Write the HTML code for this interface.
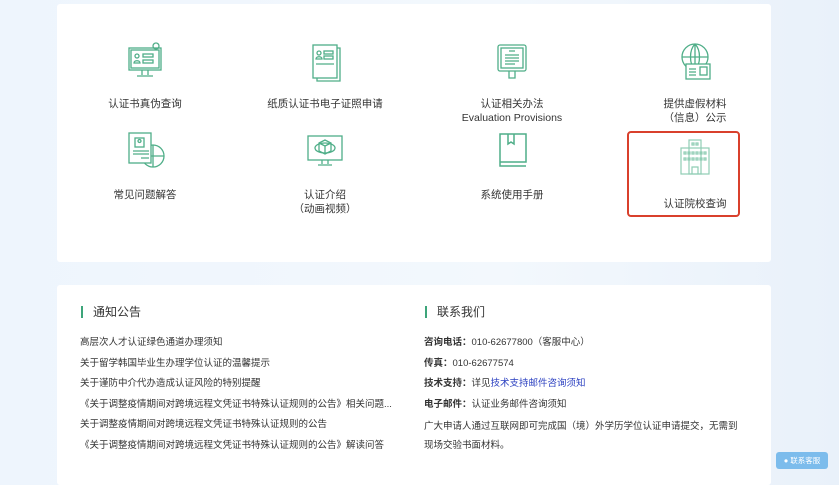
<!DOCTYPE html>
<html><head><meta charset="utf-8"><style>
*{margin:0;padding:0;box-sizing:border-box}
body{width:839px;height:476px;overflow:hidden;background:linear-gradient(90deg,#eef5fd 0%,#f3f8fd 60%,#e9f1fa 100%);font-family:"Liberation Sans","Noto Sans CJK SC",sans-serif;color:#333;font-size:10.5px;position:relative}
.card{position:absolute;left:57px;width:714px;background:#fff;border-radius:3px}
.c1{top:4px;height:258px}
.c2{top:285px;height:200px}
.item{position:absolute;width:160px;text-align:center;font-size:10.5px;line-height:14px;color:#333}
.item svg{display:block;margin:0 auto}
.red{position:absolute;left:627px;top:131px;width:113px;height:86px;border:2.5px solid #d9402c;border-radius:4px}
.h{position:absolute;font-size:12px;color:#333;padding-left:10px;border-left:2px solid #3da57a;line-height:12px}
.l{position:absolute;font-size:9.5px;color:#333;white-space:nowrap}
b{font-weight:bold}
.btn{position:absolute;left:776px;top:452px;width:52px;height:17px;background:#7cbcec;border-radius:3px;color:#fff;font-size:7.5px;line-height:17px;text-align:center}
</style></head><body>
<div class="card c1"></div>
<div class="card c2"></div>
<div class="item" style="left:65px;top:42px">
<svg width="40" height="40" viewBox="0 0 40 40" fill="none" stroke="#4fae88" stroke-width="1.3"><rect x="4" y="6" width="32" height="22"/><rect x="6" y="8" width="28" height="18"/><circle cx="12" cy="14" r="2"/><path d="M9 21c0-3 6-3 6 0z"/><rect x="18" y="12" width="10" height="3"/><rect x="18" y="18" width="10" height="3"/><path d="M17 28v5M23 28v5M12 34h16"/><circle cx="31" cy="4" r="3"/></svg><div style="margin-top:15px">认证书真伪查询</div></div>
<div class="item" style="left:245px;top:42px">
<svg width="40" height="40" viewBox="0 0 40 40" fill="none" stroke="#4fae88" stroke-width="1.3"><rect x="8" y="3" width="24" height="33"/><path d="M32 6h3v33H12v-3"/><circle cx="14" cy="11" r="2"/><path d="M11 17c0-3 6-3 6 0z"/><rect x="19" y="9" width="9" height="3"/><rect x="19" y="14" width="9" height="3"/><path d="M11 22h18"/></svg><div style="margin-top:15px">纸质认证书电子证照申请</div></div>
<div class="item" style="left:432px;top:42px">
<svg width="40" height="40" viewBox="0 0 40 40" fill="none" stroke="#4fae88" stroke-width="1.3"><rect x="6" y="3" width="28" height="26" rx="2"/><rect x="9" y="6" width="22" height="20"/><path d="M17 9h6M13 13h14M13 16h14M13 19h14M13 22h10"/><path d="M17 29v7h6v-7"/></svg><div style="margin-top:15px">认证相关办法<br>Evaluation Provisions</div></div>
<div class="item" style="left:615px;top:42px">
<svg width="40" height="40" viewBox="0 0 40 40" fill="none" stroke="#4fae88" stroke-width="1.3"><circle cx="20" cy="15" r="13"/><path d="M7 15h26M20 2v26M20 2c-6 6-6 20 0 26M20 2c6 6 6 20 0 26"/><rect x="11" y="22" width="24" height="15" fill="#fff"/><path d="M14 27h7M14 30h7M14 33h7"/><rect x="25" y="25" width="7" height="8"/></svg><div style="margin-top:15px">提供虚假材料<br>（信息）公示</div></div>
<div class="item" style="left:65px;top:130px">
<svg width="40" height="40" viewBox="0 0 40 40" fill="none" stroke="#4fae88" stroke-width="1.3"><circle cx="28" cy="26" r="11"/><path d="M17 26h22M28 15v22"/><rect x="4" y="3" width="22" height="30" fill="#fff"/><rect x="10" y="8" width="9" height="9"/><circle cx="14.5" cy="11" r="1.5"/><path d="M8 21h16M8 24h16M16 28h8"/></svg><div style="margin-top:18px">常见问题解答</div></div>
<div class="item" style="left:245px;top:130px">
<svg width="40" height="40" viewBox="0 0 40 40" fill="none" stroke="#4fae88" stroke-width="1.3"><rect x="3" y="6" width="34" height="24"/><path d="M14 13l6-3 6 3v8l-6 3-6-3zM14 13l6 3 6-3M20 16v8"/><ellipse cx="20" cy="18" rx="10" ry="5"/><path d="M17 30v4M23 30v4M13 35h14"/></svg><div style="margin-top:18px">认证介绍<br>（动画视频）</div></div>
<div class="item" style="left:432px;top:130px">
<svg width="40" height="40" viewBox="0 0 40 40" fill="none" stroke="#4fae88" stroke-width="1.5"><path d="M8 4h26v28H8zM8 32v4h26M16 4v10l3-2 3 2V4"/></svg><div style="margin-top:18px">系统使用手册</div></div>
<div class="item" style="left:615px;top:136px">
<svg width="40" height="40" viewBox="0 0 40 40" fill="none" stroke="#8fcdb4" stroke-width="1.2"><rect x="14" y="4" width="12" height="34"/><rect x="6" y="12" width="28" height="26"/><path d="M17 7h2v2h-2zM21 7h2v2h-2zM9 16h2v2H9zM13 16h2v2h-2zM17 16h2v2h-2zM21 16h2v2h-2zM25 16h2v2h-2zM29 16h2v2h-2zM9 22h2v2H9zM13 22h2v2h-2zM17 22h2v2h-2zM21 22h2v2h-2zM25 22h2v2h-2zM29 22h2v2h-2zM17 38v-7h6v7"/></svg><div style="margin-top:21px">认证院校查询</div></div>
<div class="red"></div>
<div class="h" style="left:81px;top:306px">通知公告</div>
<div class="l" style="left:80px;top:334px">高层次人才认证绿色通道办理须知</div>
<div class="l" style="left:80px;top:355px">关于留学韩国毕业生办理学位认证的温馨提示</div>
<div class="l" style="left:80px;top:375px">关于谨防中介代办造成认证风险的特别提醒</div>
<div class="l" style="left:80px;top:396px">《关于调整疫情期间对跨境远程文凭证书特殊认证规则的公告》相关问题...</div>
<div class="l" style="left:80px;top:416px">关于调整疫情期间对跨境远程文凭证书特殊认证规则的公告</div>
<div class="l" style="left:80px;top:437px">《关于调整疫情期间对跨境远程文凭证书特殊认证规则的公告》解读问答</div>
<div class="h" style="left:425px;top:306px">联系我们</div>
<div class="l" style="left:424px;top:334px"><b>咨询电话：</b>010-62677800（客服中心）</div>
<div class="l" style="left:424px;top:355px"><b>传真：</b>010-62677574</div>
<div class="l" style="left:424px;top:375px"><b>技术支持：</b>详见<span style="color:#2a3fc0">技术支持邮件咨询须知</span></div>
<div class="l" style="left:424px;top:396px"><b>电子邮件：</b>认证业务邮件咨询须知</div>
<div class="l" style="left:424px;top:418px">广大申请人通过互联网即可完成国（境）外学历学位认证申请提交，无需到</div>
<div class="l" style="left:424px;top:437px">现场交验书面材料。</div>
<div class="btn">● 联系客服</div>
</body></html>
